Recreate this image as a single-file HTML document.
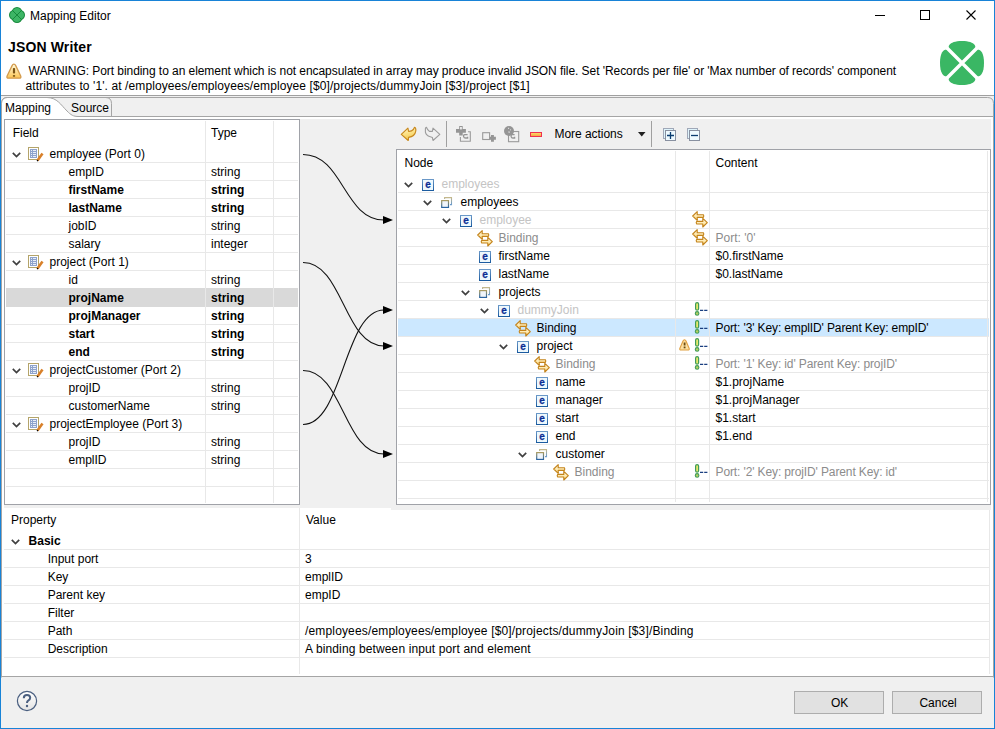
<!DOCTYPE html>
<html><head><meta charset="utf-8"><title>Mapping Editor</title>
<style>
html,body{margin:0;padding:0;}
body{width:995px;height:729px;overflow:hidden;position:relative;background:#f0f0f0;font-family:"Liberation Sans",sans-serif;font-size:12px;}
.t{position:absolute;white-space:pre;line-height:17px;height:17px;}
.r{position:absolute;}
.s{position:absolute;overflow:visible;}
</style></head><body>

<div class="r" style="left:0px;top:0px;width:995px;height:729px;background:#1883d7;"></div>
<div class="r" style="left:1px;top:1px;width:993px;height:727px;background:#f0f0f0;"></div>
<div class="r" style="left:1px;top:1px;width:993px;height:94px;background:#ffffff;"></div>
<svg class="s" style="left:9px;top:7px;" width="16" height="16" viewBox="0 0 16 16"><circle cx="8" cy="5.3" r="5.3" fill="#168a3c"/><circle cx="10.7" cy="8" r="5.3" fill="#168a3c"/><circle cx="8" cy="10.7" r="5.3" fill="#168a3c"/><circle cx="5.3" cy="8" r="5.3" fill="#168a3c"/><circle cx="8" cy="5.3" r="4.3" fill="#3db565"/><circle cx="10.7" cy="8" r="4.3" fill="#3db565"/><circle cx="8" cy="10.7" r="4.3" fill="#3db565"/><circle cx="5.3" cy="8" r="4.3" fill="#3db565"/><rect x="4" y="4" width="8" height="8" fill="#3db565"/><path d="M3.5,3.5 L12.5,12.5 M12.5,3.5 L3.5,12.5" stroke="#168a3c" stroke-width="1"/></svg>
<div class="t" style="left:30px;top:8px;color:#000;">Mapping Editor</div>
<div class="r" style="left:875px;top:15px;width:10px;height:1px;background:#000;"></div>
<div class="r" style="left:920px;top:10px;width:10px;height:10px;background:transparent;border:1px solid #000;box-sizing:border-box;"></div>
<svg class="s" style="left:966px;top:10px;" width="10" height="10" viewBox="0 0 10 10"><path d="M0.5,0.5 L9.5,9.5 M9.5,0.5 L0.5,9.5" stroke="#000" stroke-width="1.1"/></svg>
<div class="t" style="left:8px;top:39px;color:#000;font-weight:bold;font-size:14px;letter-spacing:0.15px;">JSON Writer</div>
<svg class="s" style="left:6px;top:63px;" width="16" height="17" viewBox="0 0 16 17"><defs><linearGradient id="wg" x1="0" y1="0" x2="0" y2="1"><stop offset="0" stop-color="#fffbe0"/><stop offset="1" stop-color="#fcc451"/></linearGradient></defs><path d="M7.9,1.2 Q9,1.2 9.7,2.6 L14.7,13 Q15.5,15.2 13.3,15.2 L2.5,15.2 Q0.3,15.2 1.1,13 L6.1,2.6 Q6.8,1.2 7.9,1.2 Z" fill="url(#wg)" stroke="#d39a4c" stroke-width="1.3" stroke-linejoin="round"/><rect x="6.9" y="5" width="2.2" height="5.6" rx="0.8" fill="#7a5214"/><rect x="6.9" y="12" width="2.2" height="1.8" fill="#8a6420"/></svg>
<div class="t" style="left:28.6px;top:63px;color:#000;letter-spacing:-0.06px;">WARNING: Port binding to an element which is not encapsulated in array may produce invalid JSON file. Set 'Records per file' or 'Max number of records' component</div>
<div class="t" style="left:25.6px;top:78px;color:#000;letter-spacing:0.1px;">attributes to '1'. at /employees/employees/employee [$0]/projects/dummyJoin [$3]/project [$1]</div>
<svg class="s" style="left:938px;top:39px;" width="48" height="48" viewBox="0 0 48 48"><path transform="rotate(0 24 24)" d="M24,24 L12.5,12.5 C8.5,8.5 10,2 24,2 C38,2 39.5,8.5 35.5,12.5 Z" fill="#3ab764"/><path transform="rotate(90 24 24)" d="M24,24 L12.5,12.5 C8.5,8.5 10,2 24,2 C38,2 39.5,8.5 35.5,12.5 Z" fill="#3ab764"/><path transform="rotate(180 24 24)" d="M24,24 L12.5,12.5 C8.5,8.5 10,2 24,2 C38,2 39.5,8.5 35.5,12.5 Z" fill="#3ab764"/><path transform="rotate(270 24 24)" d="M24,24 L12.5,12.5 C8.5,8.5 10,2 24,2 C38,2 39.5,8.5 35.5,12.5 Z" fill="#3ab764"/><path d="M2,2 L46,46 M46,2 L2,46" stroke="#fff" stroke-width="3.4"/></svg>
<div class="r" style="left:1px;top:95px;width:993px;height:1px;background:#a0a0a0;"></div>
<div class="r" style="left:2px;top:97px;width:991px;height:580px;background:#ffffff;"></div>
<div class="r" style="left:1px;top:97px;width:7px;height:7px;background:#f0f0f0;"></div>
<div class="r" style="left:986px;top:97px;width:8px;height:7px;background:#f0f0f0;"></div>
<svg class="s" style="left:1px;top:97px;" width="993" height="581" viewBox="0 0 993 581"><path d="M0.5,580.5 L0.5,6.5 Q0.5,0.5 6.5,0.5 L986.5,0.5 Q992.5,0.5 992.5,6.5 L992.5,580.5" fill="#f0f0f0" stroke="#a5a5a5" stroke-width="1"/><rect x="1" y="20" width="991" height="560" fill="#ffffff"/><path d="M0,19.5 L993,19.5" stroke="#a5a5a5" stroke-width="1"/><path d="M0,579.5 L993,579.5" stroke="#a5a5a5" stroke-width="1"/><path d="M110.5,19.5 L110.5,6.5 Q110.5,0.5 104.5,0.5" fill="none" stroke="#a5a5a5" stroke-width="1"/><path d="M1,20 L1,6.5 Q1,1 6.5,1 L46,1 C56,1 60,8 66,14 C70,18 72,19.5 78,19.5 L78,20 Z" fill="#ffffff"/><path d="M0.5,20 L0.5,6.5 Q0.5,0.5 6.5,0.5 L46,0.5 C56,0.5 60,8 66,14 C70,18 72,19.5 78,19.5 L110.5,19.5" fill="none" stroke="#a5a5a5" stroke-width="1"/></svg>
<div class="t" style="left:5px;top:100px;color:#000;">Mapping</div>
<div class="t" style="left:71px;top:100px;color:#000;">Source</div>
<div class="r" style="left:4px;top:119px;width:987px;height:389px;background:#f0f0f0;"></div>
<div class="r" style="left:391px;top:508px;width:600px;height:2px;background:#f0f0f0;"></div>
<div class="r" style="left:4px;top:119px;width:296px;height:386px;background:#ffffff;border:1px solid #a0a2a8;box-sizing:border-box;"></div>
<div class="r" style="left:6px;top:162px;width:292px;height:1px;background:#e8e8e8;"></div>
<div class="r" style="left:6px;top:180px;width:292px;height:1px;background:#e8e8e8;"></div>
<div class="r" style="left:6px;top:198px;width:292px;height:1px;background:#e8e8e8;"></div>
<div class="r" style="left:6px;top:216px;width:292px;height:1px;background:#e8e8e8;"></div>
<div class="r" style="left:6px;top:234px;width:292px;height:1px;background:#e8e8e8;"></div>
<div class="r" style="left:6px;top:252px;width:292px;height:1px;background:#e8e8e8;"></div>
<div class="r" style="left:6px;top:270px;width:292px;height:1px;background:#e8e8e8;"></div>
<div class="r" style="left:6px;top:288px;width:292px;height:1px;background:#e8e8e8;"></div>
<div class="r" style="left:6px;top:306px;width:292px;height:1px;background:#e8e8e8;"></div>
<div class="r" style="left:6px;top:324px;width:292px;height:1px;background:#e8e8e8;"></div>
<div class="r" style="left:6px;top:342px;width:292px;height:1px;background:#e8e8e8;"></div>
<div class="r" style="left:6px;top:360px;width:292px;height:1px;background:#e8e8e8;"></div>
<div class="r" style="left:6px;top:378px;width:292px;height:1px;background:#e8e8e8;"></div>
<div class="r" style="left:6px;top:396px;width:292px;height:1px;background:#e8e8e8;"></div>
<div class="r" style="left:6px;top:414px;width:292px;height:1px;background:#e8e8e8;"></div>
<div class="r" style="left:6px;top:432px;width:292px;height:1px;background:#e8e8e8;"></div>
<div class="r" style="left:6px;top:450px;width:292px;height:1px;background:#e8e8e8;"></div>
<div class="r" style="left:6px;top:468px;width:292px;height:1px;background:#e8e8e8;"></div>
<div class="r" style="left:6px;top:486px;width:292px;height:1px;background:#e8e8e8;"></div>
<div class="r" style="left:6px;top:288px;width:292px;height:19px;background:#d9d9d9;"></div>
<div class="r" style="left:205px;top:121px;width:1px;height:382px;background:#e8e8e8;"></div>
<div class="r" style="left:273px;top:121px;width:1px;height:382px;background:#e8e8e8;"></div>
<div class="t" style="left:12.7px;top:125px;color:#000;">Field</div>
<div class="t" style="left:211px;top:125px;color:#000;">Type</div>
<svg class="s" style="left:12px;top:152px;" width="9" height="6" viewBox="0 0 9 6"><path d="M0.8,0.8 L4.5,4.5 L8.2,0.8" fill="none" stroke="#404040" stroke-width="1.7"/></svg>
<svg class="s" style="left:28px;top:147px;" width="16" height="16" viewBox="0 0 16 16"><rect x="0.5" y="0.5" width="10" height="12" fill="#fff" stroke="#b4a46a"/><rect x="2" y="2" width="7" height="9" fill="#8ea3cc"/><path d="M3,3.5h1 M5,3.5h3 M3,5.5h1 M5,5.5h3 M3,7.5h1 M5,7.5h3 M3,9.5h1 M5,9.5h3" stroke="#e8eef8" stroke-width="1"/><path d="M9.5,13.5 L14.5,6.5" stroke="#d8802a" stroke-width="2.6"/><path d="M9.2,14.2 L9.8,13.2" stroke="#000" stroke-width="1.4"/></svg>
<div class="t" style="left:49.5px;top:146px;color:#000;">employee (Port 0)</div>
<div class="t" style="left:68.5px;top:164px;color:#000;">empID</div>
<div class="t" style="left:211px;top:164px;color:#000;">string</div>
<div class="t" style="left:68.5px;top:182px;color:#000;font-weight:bold;">firstName</div>
<div class="t" style="left:211px;top:182px;color:#000;font-weight:bold;">string</div>
<div class="t" style="left:68.5px;top:200px;color:#000;font-weight:bold;">lastName</div>
<div class="t" style="left:211px;top:200px;color:#000;font-weight:bold;">string</div>
<div class="t" style="left:68.5px;top:218px;color:#000;">jobID</div>
<div class="t" style="left:211px;top:218px;color:#000;">string</div>
<div class="t" style="left:68.5px;top:236px;color:#000;">salary</div>
<div class="t" style="left:211px;top:236px;color:#000;">integer</div>
<svg class="s" style="left:12px;top:260px;" width="9" height="6" viewBox="0 0 9 6"><path d="M0.8,0.8 L4.5,4.5 L8.2,0.8" fill="none" stroke="#404040" stroke-width="1.7"/></svg>
<svg class="s" style="left:28px;top:255px;" width="16" height="16" viewBox="0 0 16 16"><rect x="0.5" y="0.5" width="10" height="12" fill="#fff" stroke="#b4a46a"/><rect x="2" y="2" width="7" height="9" fill="#8ea3cc"/><path d="M3,3.5h1 M5,3.5h3 M3,5.5h1 M5,5.5h3 M3,7.5h1 M5,7.5h3 M3,9.5h1 M5,9.5h3" stroke="#e8eef8" stroke-width="1"/><path d="M9.5,13.5 L14.5,6.5" stroke="#d8802a" stroke-width="2.6"/><path d="M9.2,14.2 L9.8,13.2" stroke="#000" stroke-width="1.4"/></svg>
<div class="t" style="left:49.5px;top:254px;color:#000;">project (Port 1)</div>
<div class="t" style="left:68.5px;top:272px;color:#000;">id</div>
<div class="t" style="left:211px;top:272px;color:#000;">string</div>
<div class="t" style="left:68.5px;top:290px;color:#000;font-weight:bold;">projName</div>
<div class="t" style="left:211px;top:290px;color:#000;font-weight:bold;">string</div>
<div class="t" style="left:68.5px;top:308px;color:#000;font-weight:bold;">projManager</div>
<div class="t" style="left:211px;top:308px;color:#000;font-weight:bold;">string</div>
<div class="t" style="left:68.5px;top:326px;color:#000;font-weight:bold;">start</div>
<div class="t" style="left:211px;top:326px;color:#000;font-weight:bold;">string</div>
<div class="t" style="left:68.5px;top:344px;color:#000;font-weight:bold;">end</div>
<div class="t" style="left:211px;top:344px;color:#000;font-weight:bold;">string</div>
<svg class="s" style="left:12px;top:368px;" width="9" height="6" viewBox="0 0 9 6"><path d="M0.8,0.8 L4.5,4.5 L8.2,0.8" fill="none" stroke="#404040" stroke-width="1.7"/></svg>
<svg class="s" style="left:28px;top:363px;" width="16" height="16" viewBox="0 0 16 16"><rect x="0.5" y="0.5" width="10" height="12" fill="#fff" stroke="#b4a46a"/><rect x="2" y="2" width="7" height="9" fill="#8ea3cc"/><path d="M3,3.5h1 M5,3.5h3 M3,5.5h1 M5,5.5h3 M3,7.5h1 M5,7.5h3 M3,9.5h1 M5,9.5h3" stroke="#e8eef8" stroke-width="1"/><path d="M9.5,13.5 L14.5,6.5" stroke="#d8802a" stroke-width="2.6"/><path d="M9.2,14.2 L9.8,13.2" stroke="#000" stroke-width="1.4"/></svg>
<div class="t" style="left:49.5px;top:362px;color:#000;">projectCustomer (Port 2)</div>
<div class="t" style="left:68.5px;top:380px;color:#000;">projID</div>
<div class="t" style="left:211px;top:380px;color:#000;">string</div>
<div class="t" style="left:68.5px;top:398px;color:#000;">customerName</div>
<div class="t" style="left:211px;top:398px;color:#000;">string</div>
<svg class="s" style="left:12px;top:422px;" width="9" height="6" viewBox="0 0 9 6"><path d="M0.8,0.8 L4.5,4.5 L8.2,0.8" fill="none" stroke="#404040" stroke-width="1.7"/></svg>
<svg class="s" style="left:28px;top:417px;" width="16" height="16" viewBox="0 0 16 16"><rect x="0.5" y="0.5" width="10" height="12" fill="#fff" stroke="#b4a46a"/><rect x="2" y="2" width="7" height="9" fill="#8ea3cc"/><path d="M3,3.5h1 M5,3.5h3 M3,5.5h1 M5,5.5h3 M3,7.5h1 M5,7.5h3 M3,9.5h1 M5,9.5h3" stroke="#e8eef8" stroke-width="1"/><path d="M9.5,13.5 L14.5,6.5" stroke="#d8802a" stroke-width="2.6"/><path d="M9.2,14.2 L9.8,13.2" stroke="#000" stroke-width="1.4"/></svg>
<div class="t" style="left:49.5px;top:416px;color:#000;">projectEmployee (Port 3)</div>
<div class="t" style="left:68.5px;top:434px;color:#000;">projID</div>
<div class="t" style="left:211px;top:434px;color:#000;">string</div>
<div class="t" style="left:68.5px;top:452px;color:#000;">emplID</div>
<div class="t" style="left:211px;top:452px;color:#000;">string</div>
<svg class="s" style="left:400px;top:126px;" width="17" height="16" viewBox="0 0 17 16"><defs><linearGradient id="ug" x1="0" y1="0" x2="0.3" y2="1"><stop offset="0" stop-color="#fffbe8"/><stop offset="0.5" stop-color="#fde48a"/><stop offset="1" stop-color="#f2c850"/></linearGradient></defs><path d="M1.3,8.4 L7.9,2.1 L8.6,5.4 Q11.5,5.6 13.4,3.5 Q14,2 14.5,1.3 Q16.2,2 15.8,5 Q15.5,7.5 13.4,9.5 Q11.8,11 8.6,11.4 L8.2,14.5 Z" fill="url(#ug)" stroke="#c8881c" stroke-width="1.15" stroke-linejoin="round"/></svg>
<svg class="s" style="left:424px;top:126px;" width="17" height="16" viewBox="0 0 17 16"><path d="M15.8,8.4 L9,2.1 L8.4,5.4 L5.4,5.4 Q3.5,4 2.4,1.3 Q1.4,1.8 1.4,2.6 L1.4,6.2 Q1.8,8 2.7,8.7 Q4,10 4.9,10.3 L8.4,11.4 L9,14.5 Z" fill="none" stroke="#9c9c9c" stroke-width="1.1" stroke-linejoin="round"/></svg>
<div class="r" style="left:446px;top:121px;width:1px;height:26px;background:#a0a0a0;"></div>
<svg class="s" style="left:453px;top:124px;" width="22" height="20" viewBox="0 0 22 20"><path d="M6.2,2.1 h3.5 v3 h3.2 v3.7 h-3.2 v2.7 h-3.5 v-2.7 h-3.2 v-3.7 h3.2 Z" fill="#959595"/><rect x="7.1" y="3" width="1.7" height="2.4" fill="#f4f4f4"/><path d="M15,7.8 H17.3 V17.3 H7.4 V13" fill="none" stroke="#9a9a9a" stroke-width="1.1"/><path d="M14.6,10.6 H11.8 Q10.3,10.8 10.6,12.6 Q11,14 12.5,14 H14.6 V12.8" fill="none" stroke="#959595" stroke-width="1.3"/></svg>
<svg class="s" style="left:478px;top:124px;" width="22" height="20" viewBox="0 0 22 20"><rect x="4.7" y="8.7" width="6.9" height="6.8" fill="none" stroke="#9a9a9a" stroke-width="1.1"/><path d="M14.45,11 v6.7 M11.7,14.25 h6.2" stroke="#959595" stroke-width="2.9"/></svg>
<svg class="s" style="left:500px;top:124px;" width="22" height="20" viewBox="0 0 22 20"><rect x="8.5" y="7.5" width="10.2" height="10.2" fill="none" stroke="#9a9a9a" stroke-width="1.1"/><circle cx="9" cy="7" r="5" fill="#959595"/><path d="M8.3,4 l0.6,0.6 M10.2,5.6 l0.6,0.6 M8.6,7.6 l0.9,0.9" stroke="#f0f0f0" stroke-width="1.1"/><path d="M14.6,10.6 H12.2 Q10.9,10.8 11.1,12.6 Q11.5,14 12.8,14 H14.6 V12.8" fill="none" stroke="#959595" stroke-width="1.3"/></svg>
<svg class="s" style="left:530px;top:132px;" width="13" height="6" viewBox="0 0 13 6"><defs><linearGradient id="rg" x1="0" y1="0" x2="0" y2="1"><stop offset="0" stop-color="#ffe070"/><stop offset="1" stop-color="#f4a040"/></linearGradient></defs><rect x="0.5" y="0.5" width="11" height="4" fill="url(#rg)" stroke="#f03050"/></svg>
<div class="t" style="left:554.5px;top:126px;color:#000;letter-spacing:-0.05px;">More actions</div>
<svg class="s" style="left:638px;top:132px;" width="8" height="5" viewBox="0 0 8 5"><path d="M0,0 L7.5,0 L3.75,4.5 Z" fill="#202020"/></svg>
<div class="r" style="left:651px;top:121px;width:1px;height:26px;background:#a0a0a0;"></div>
<svg class="s" style="left:662px;top:127px;" width="15" height="15" viewBox="0 0 15 15"><rect x="1.5" y="1.5" width="10" height="10" fill="#dff4fc" stroke="#a0a8b8"/><rect x="3.5" y="3.5" width="10" height="10" fill="#eefaff" stroke="#8890a0"/><path d="M5,8.5 h7 M8.5,5 v7" stroke="#0a3d70" stroke-width="1.3"/></svg>
<svg class="s" style="left:686px;top:127px;" width="15" height="15" viewBox="0 0 15 15"><rect x="1.5" y="1.5" width="10" height="10" fill="#dff4fc" stroke="#a0a8b8"/><rect x="3.5" y="3.5" width="10" height="10" fill="#eefaff" stroke="#8890a0"/><path d="M5,8.5 h7" stroke="#0a3d70" stroke-width="1.3"/></svg>
<div class="r" style="left:396px;top:149px;width:595px;height:356px;background:#ffffff;border:1px solid #a0a2a8;box-sizing:border-box;"></div>
<div class="r" style="left:398px;top:192px;width:591px;height:1px;background:#e8e8e8;"></div>
<div class="r" style="left:398px;top:210px;width:591px;height:1px;background:#e8e8e8;"></div>
<div class="r" style="left:398px;top:228px;width:591px;height:1px;background:#e8e8e8;"></div>
<div class="r" style="left:398px;top:246px;width:591px;height:1px;background:#e8e8e8;"></div>
<div class="r" style="left:398px;top:264px;width:591px;height:1px;background:#e8e8e8;"></div>
<div class="r" style="left:398px;top:282px;width:591px;height:1px;background:#e8e8e8;"></div>
<div class="r" style="left:398px;top:300px;width:591px;height:1px;background:#e8e8e8;"></div>
<div class="r" style="left:398px;top:318px;width:591px;height:1px;background:#e8e8e8;"></div>
<div class="r" style="left:398px;top:336px;width:591px;height:1px;background:#e8e8e8;"></div>
<div class="r" style="left:398px;top:354px;width:591px;height:1px;background:#e8e8e8;"></div>
<div class="r" style="left:398px;top:372px;width:591px;height:1px;background:#e8e8e8;"></div>
<div class="r" style="left:398px;top:390px;width:591px;height:1px;background:#e8e8e8;"></div>
<div class="r" style="left:398px;top:408px;width:591px;height:1px;background:#e8e8e8;"></div>
<div class="r" style="left:398px;top:426px;width:591px;height:1px;background:#e8e8e8;"></div>
<div class="r" style="left:398px;top:444px;width:591px;height:1px;background:#e8e8e8;"></div>
<div class="r" style="left:398px;top:462px;width:591px;height:1px;background:#e8e8e8;"></div>
<div class="r" style="left:398px;top:480px;width:591px;height:1px;background:#e8e8e8;"></div>
<div class="r" style="left:398px;top:498px;width:591px;height:1px;background:#e8e8e8;"></div>
<div class="r" style="left:398px;top:319px;width:591px;height:17px;background:#cce8ff;"></div>
<div class="r" style="left:675px;top:151px;width:1px;height:351px;background:#e8e8e8;"></div>
<div class="r" style="left:709px;top:151px;width:1px;height:351px;background:#e8e8e8;"></div>
<div class="r" style="left:987px;top:151px;width:1px;height:351px;background:#e8e8e8;"></div>
<div class="t" style="left:404.5px;top:155px;color:#000;">Node</div>
<div class="t" style="left:715.5px;top:155px;color:#000;">Content</div>
<svg class="s" style="left:404px;top:182px;" width="9" height="6" viewBox="0 0 9 6"><path d="M0.8,0.8 L4.5,4.5 L8.2,0.8" fill="none" stroke="#404040" stroke-width="1.7"/></svg>
<svg class="s" style="left:422px;top:179px;" width="12" height="12" viewBox="0 0 12 12"><defs><linearGradient id="eg" x1="0" y1="0" x2="0" y2="1"><stop offset="0" stop-color="#6a98c8"/><stop offset="1" stop-color="#1c5ca0"/></linearGradient></defs><rect x="0.5" y="0.5" width="11" height="11" fill="#eef8fd" stroke="url(#eg)"/><text x="6.1" y="8.8" text-anchor="middle" font-family="Liberation Sans" font-weight="bold" font-size="10" fill="#0c2e94" stroke="#0c2e94" stroke-width="0.3">e</text></svg>
<div class="t" style="left:441.5px;top:176px;color:#c4c4c4;">employees</div>
<svg class="s" style="left:423px;top:200px;" width="9" height="6" viewBox="0 0 9 6"><path d="M0.8,0.8 L4.5,4.5 L8.2,0.8" fill="none" stroke="#404040" stroke-width="1.7"/></svg>
<svg class="s" style="left:441px;top:197px;" width="12" height="12" viewBox="0 0 12 12"><defs><linearGradient id="cg" x1="0" y1="0" x2="0" y2="1"><stop offset="0" stop-color="#a89a62"/><stop offset="1" stop-color="#2a64a2"/></linearGradient><linearGradient id="cg2" x1="0" y1="0" x2="0" y2="1"><stop offset="0" stop-color="#c4b88c"/><stop offset="1" stop-color="#6a9acb"/></linearGradient></defs><path d="M3.6,2 V0.6 H10.5 V7.6 H9" fill="none" stroke="url(#cg2)" stroke-width="1.1"/><rect x="0.7" y="3.6" width="6.8" height="6.8" fill="#f0f5fb" stroke="url(#cg)" stroke-width="1.2"/></svg>
<div class="t" style="left:460.5px;top:194px;color:#000;">employees</div>
<svg class="s" style="left:442px;top:218px;" width="9" height="6" viewBox="0 0 9 6"><path d="M0.8,0.8 L4.5,4.5 L8.2,0.8" fill="none" stroke="#404040" stroke-width="1.7"/></svg>
<svg class="s" style="left:460px;top:215px;" width="12" height="12" viewBox="0 0 12 12"><defs><linearGradient id="eg" x1="0" y1="0" x2="0" y2="1"><stop offset="0" stop-color="#6a98c8"/><stop offset="1" stop-color="#1c5ca0"/></linearGradient></defs><rect x="0.5" y="0.5" width="11" height="11" fill="#eef8fd" stroke="url(#eg)"/><text x="6.1" y="8.8" text-anchor="middle" font-family="Liberation Sans" font-weight="bold" font-size="10" fill="#0c2e94" stroke="#0c2e94" stroke-width="0.3">e</text></svg>
<div class="t" style="left:479.5px;top:212px;color:#c4c4c4;">employee</div>
<svg class="s" style="left:692px;top:211px;" width="16" height="17" viewBox="0 0 16 17"><defs><linearGradient id="bg" x1="0" y1="0" x2="0" y2="1"><stop offset="0" stop-color="#fffbe8"/><stop offset="1" stop-color="#ffdc80"/></linearGradient></defs><path d="M0.7,5 L5.2,0.7 L5.2,3.7 L11.3,3.7 Q12.3,5 11.3,6.3 L5.2,6.3 L5.2,9.3 Z" fill="url(#bg)" stroke="#c4841c" stroke-width="1.15" stroke-linejoin="round"/><path d="M15.3,11.7 L10.8,7.4 L10.8,10.4 L4.7,10.4 Q3.7,11.7 4.7,13 L10.8,13 L10.8,16 Z" fill="url(#bg)" stroke="#c4841c" stroke-width="1.15" stroke-linejoin="round"/></svg>
<svg class="s" style="left:477px;top:230px;" width="16" height="17" viewBox="0 0 16 17"><defs><linearGradient id="bg" x1="0" y1="0" x2="0" y2="1"><stop offset="0" stop-color="#fffbe8"/><stop offset="1" stop-color="#ffdc80"/></linearGradient></defs><path d="M0.7,5 L5.2,0.7 L5.2,3.7 L11.3,3.7 Q12.3,5 11.3,6.3 L5.2,6.3 L5.2,9.3 Z" fill="url(#bg)" stroke="#c4841c" stroke-width="1.15" stroke-linejoin="round"/><path d="M15.3,11.7 L10.8,7.4 L10.8,10.4 L4.7,10.4 Q3.7,11.7 4.7,13 L10.8,13 L10.8,16 Z" fill="url(#bg)" stroke="#c4841c" stroke-width="1.15" stroke-linejoin="round"/></svg>
<div class="t" style="left:498.5px;top:230px;color:#8c8c8c;">Binding</div>
<svg class="s" style="left:692px;top:229px;" width="16" height="17" viewBox="0 0 16 17"><defs><linearGradient id="bg" x1="0" y1="0" x2="0" y2="1"><stop offset="0" stop-color="#fffbe8"/><stop offset="1" stop-color="#ffdc80"/></linearGradient></defs><path d="M0.7,5 L5.2,0.7 L5.2,3.7 L11.3,3.7 Q12.3,5 11.3,6.3 L5.2,6.3 L5.2,9.3 Z" fill="url(#bg)" stroke="#c4841c" stroke-width="1.15" stroke-linejoin="round"/><path d="M15.3,11.7 L10.8,7.4 L10.8,10.4 L4.7,10.4 Q3.7,11.7 4.7,13 L10.8,13 L10.8,16 Z" fill="url(#bg)" stroke="#c4841c" stroke-width="1.15" stroke-linejoin="round"/></svg>
<div class="t" style="left:715.5px;top:230px;color:#8c8c8c;">Port: '0'</div>
<svg class="s" style="left:479px;top:251px;" width="12" height="12" viewBox="0 0 12 12"><defs><linearGradient id="eg" x1="0" y1="0" x2="0" y2="1"><stop offset="0" stop-color="#6a98c8"/><stop offset="1" stop-color="#1c5ca0"/></linearGradient></defs><rect x="0.5" y="0.5" width="11" height="11" fill="#eef8fd" stroke="url(#eg)"/><text x="6.1" y="8.8" text-anchor="middle" font-family="Liberation Sans" font-weight="bold" font-size="10" fill="#0c2e94" stroke="#0c2e94" stroke-width="0.3">e</text></svg>
<div class="t" style="left:498.5px;top:248px;color:#000;">firstName</div>
<div class="t" style="left:715.5px;top:248px;color:#000;">$0.firstName</div>
<svg class="s" style="left:479px;top:269px;" width="12" height="12" viewBox="0 0 12 12"><defs><linearGradient id="eg" x1="0" y1="0" x2="0" y2="1"><stop offset="0" stop-color="#6a98c8"/><stop offset="1" stop-color="#1c5ca0"/></linearGradient></defs><rect x="0.5" y="0.5" width="11" height="11" fill="#eef8fd" stroke="url(#eg)"/><text x="6.1" y="8.8" text-anchor="middle" font-family="Liberation Sans" font-weight="bold" font-size="10" fill="#0c2e94" stroke="#0c2e94" stroke-width="0.3">e</text></svg>
<div class="t" style="left:498.5px;top:266px;color:#000;">lastName</div>
<div class="t" style="left:715.5px;top:266px;color:#000;">$0.lastName</div>
<svg class="s" style="left:461px;top:290px;" width="9" height="6" viewBox="0 0 9 6"><path d="M0.8,0.8 L4.5,4.5 L8.2,0.8" fill="none" stroke="#404040" stroke-width="1.7"/></svg>
<svg class="s" style="left:479px;top:287px;" width="12" height="12" viewBox="0 0 12 12"><defs><linearGradient id="cg" x1="0" y1="0" x2="0" y2="1"><stop offset="0" stop-color="#a89a62"/><stop offset="1" stop-color="#2a64a2"/></linearGradient><linearGradient id="cg2" x1="0" y1="0" x2="0" y2="1"><stop offset="0" stop-color="#c4b88c"/><stop offset="1" stop-color="#6a9acb"/></linearGradient></defs><path d="M3.6,2 V0.6 H10.5 V7.6 H9" fill="none" stroke="url(#cg2)" stroke-width="1.1"/><rect x="0.7" y="3.6" width="6.8" height="6.8" fill="#f0f5fb" stroke="url(#cg)" stroke-width="1.2"/></svg>
<div class="t" style="left:498.5px;top:284px;color:#000;">projects</div>
<svg class="s" style="left:480px;top:308px;" width="9" height="6" viewBox="0 0 9 6"><path d="M0.8,0.8 L4.5,4.5 L8.2,0.8" fill="none" stroke="#404040" stroke-width="1.7"/></svg>
<svg class="s" style="left:498px;top:305px;" width="12" height="12" viewBox="0 0 12 12"><defs><linearGradient id="eg" x1="0" y1="0" x2="0" y2="1"><stop offset="0" stop-color="#6a98c8"/><stop offset="1" stop-color="#1c5ca0"/></linearGradient></defs><rect x="0.5" y="0.5" width="11" height="11" fill="#eef8fd" stroke="url(#eg)"/><text x="6.1" y="8.8" text-anchor="middle" font-family="Liberation Sans" font-weight="bold" font-size="10" fill="#0c2e94" stroke="#0c2e94" stroke-width="0.3">e</text></svg>
<div class="t" style="left:517.5px;top:302px;color:#c4c4c4;">dummyJoin</div>
<svg class="s" style="left:695px;top:302px;" width="13" height="15" viewBox="0 0 13 15"><rect x="0.6" y="0.6" width="3" height="7.6" rx="1.5" fill="#e6e86a" stroke="#3f9c5a" stroke-width="1.2"/><circle cx="2.1" cy="11.4" r="1.8" fill="#b8d060" stroke="#3f9c5a" stroke-width="1.1"/><path d="M5,8.4 h3.2 M9.2,8.4 h3.2" stroke="#1a3f80" stroke-width="1.2"/></svg>
<svg class="s" style="left:515px;top:320px;" width="16" height="17" viewBox="0 0 16 17"><defs><linearGradient id="bg" x1="0" y1="0" x2="0" y2="1"><stop offset="0" stop-color="#fffbe8"/><stop offset="1" stop-color="#ffdc80"/></linearGradient></defs><path d="M0.7,5 L5.2,0.7 L5.2,3.7 L11.3,3.7 Q12.3,5 11.3,6.3 L5.2,6.3 L5.2,9.3 Z" fill="url(#bg)" stroke="#c4841c" stroke-width="1.15" stroke-linejoin="round"/><path d="M15.3,11.7 L10.8,7.4 L10.8,10.4 L4.7,10.4 Q3.7,11.7 4.7,13 L10.8,13 L10.8,16 Z" fill="url(#bg)" stroke="#c4841c" stroke-width="1.15" stroke-linejoin="round"/></svg>
<div class="t" style="left:536.5px;top:320px;color:#000;">Binding</div>
<svg class="s" style="left:695px;top:320px;" width="13" height="15" viewBox="0 0 13 15"><rect x="0.6" y="0.6" width="3" height="7.6" rx="1.5" fill="#e6e86a" stroke="#3f9c5a" stroke-width="1.2"/><circle cx="2.1" cy="11.4" r="1.8" fill="#b8d060" stroke="#3f9c5a" stroke-width="1.1"/><path d="M5,8.4 h3.2 M9.2,8.4 h3.2" stroke="#1a3f80" stroke-width="1.2"/></svg>
<div class="t" style="left:715.5px;top:320px;color:#000;letter-spacing:-0.12px;">Port: '3' Key: emplID' Parent Key: empID'</div>
<svg class="s" style="left:499px;top:344px;" width="9" height="6" viewBox="0 0 9 6"><path d="M0.8,0.8 L4.5,4.5 L8.2,0.8" fill="none" stroke="#404040" stroke-width="1.7"/></svg>
<svg class="s" style="left:517px;top:341px;" width="12" height="12" viewBox="0 0 12 12"><defs><linearGradient id="eg" x1="0" y1="0" x2="0" y2="1"><stop offset="0" stop-color="#6a98c8"/><stop offset="1" stop-color="#1c5ca0"/></linearGradient></defs><rect x="0.5" y="0.5" width="11" height="11" fill="#eef8fd" stroke="url(#eg)"/><text x="6.1" y="8.8" text-anchor="middle" font-family="Liberation Sans" font-weight="bold" font-size="10" fill="#0c2e94" stroke="#0c2e94" stroke-width="0.3">e</text></svg>
<div class="t" style="left:536.5px;top:338px;color:#000;">project</div>
<svg class="s" style="left:695px;top:338px;" width="13" height="15" viewBox="0 0 13 15"><rect x="0.6" y="0.6" width="3" height="7.6" rx="1.5" fill="#e6e86a" stroke="#3f9c5a" stroke-width="1.2"/><circle cx="2.1" cy="11.4" r="1.8" fill="#b8d060" stroke="#3f9c5a" stroke-width="1.1"/><path d="M5,8.4 h3.2 M9.2,8.4 h3.2" stroke="#1a3f80" stroke-width="1.2"/></svg>
<svg class="s" style="left:679px;top:339px;" width="11" height="12" viewBox="0 0 11 12"><path d="M5.5,0.8 Q6.5,0.8 7,2 L10.2,9.5 Q10.6,11 9,11 L2,11 Q0.4,11 0.8,9.5 L4,2 Q4.5,0.8 5.5,0.8 Z" fill="#fde0a0" stroke="#e0a040" stroke-width="1.1"/><rect x="4.7" y="3.5" width="1.8" height="3" fill="#6a4a10"/><rect x="4.7" y="7.5" width="1.8" height="1.8" fill="#6a4a10"/></svg>
<svg class="s" style="left:534px;top:356px;" width="16" height="17" viewBox="0 0 16 17"><defs><linearGradient id="bg" x1="0" y1="0" x2="0" y2="1"><stop offset="0" stop-color="#fffbe8"/><stop offset="1" stop-color="#ffdc80"/></linearGradient></defs><path d="M0.7,5 L5.2,0.7 L5.2,3.7 L11.3,3.7 Q12.3,5 11.3,6.3 L5.2,6.3 L5.2,9.3 Z" fill="url(#bg)" stroke="#c4841c" stroke-width="1.15" stroke-linejoin="round"/><path d="M15.3,11.7 L10.8,7.4 L10.8,10.4 L4.7,10.4 Q3.7,11.7 4.7,13 L10.8,13 L10.8,16 Z" fill="url(#bg)" stroke="#c4841c" stroke-width="1.15" stroke-linejoin="round"/></svg>
<div class="t" style="left:555.5px;top:356px;color:#8c8c8c;">Binding</div>
<svg class="s" style="left:695px;top:356px;" width="13" height="15" viewBox="0 0 13 15"><rect x="0.6" y="0.6" width="3" height="7.6" rx="1.5" fill="#e6e86a" stroke="#3f9c5a" stroke-width="1.2"/><circle cx="2.1" cy="11.4" r="1.8" fill="#b8d060" stroke="#3f9c5a" stroke-width="1.1"/><path d="M5,8.4 h3.2 M9.2,8.4 h3.2" stroke="#1a3f80" stroke-width="1.2"/></svg>
<div class="t" style="left:715.5px;top:356px;color:#8c8c8c;letter-spacing:-0.12px;">Port: '1' Key: id' Parent Key: projID'</div>
<svg class="s" style="left:536px;top:377px;" width="12" height="12" viewBox="0 0 12 12"><defs><linearGradient id="eg" x1="0" y1="0" x2="0" y2="1"><stop offset="0" stop-color="#6a98c8"/><stop offset="1" stop-color="#1c5ca0"/></linearGradient></defs><rect x="0.5" y="0.5" width="11" height="11" fill="#eef8fd" stroke="url(#eg)"/><text x="6.1" y="8.8" text-anchor="middle" font-family="Liberation Sans" font-weight="bold" font-size="10" fill="#0c2e94" stroke="#0c2e94" stroke-width="0.3">e</text></svg>
<div class="t" style="left:555.5px;top:374px;color:#000;">name</div>
<div class="t" style="left:715.5px;top:374px;color:#000;">$1.projName</div>
<svg class="s" style="left:536px;top:395px;" width="12" height="12" viewBox="0 0 12 12"><defs><linearGradient id="eg" x1="0" y1="0" x2="0" y2="1"><stop offset="0" stop-color="#6a98c8"/><stop offset="1" stop-color="#1c5ca0"/></linearGradient></defs><rect x="0.5" y="0.5" width="11" height="11" fill="#eef8fd" stroke="url(#eg)"/><text x="6.1" y="8.8" text-anchor="middle" font-family="Liberation Sans" font-weight="bold" font-size="10" fill="#0c2e94" stroke="#0c2e94" stroke-width="0.3">e</text></svg>
<div class="t" style="left:555.5px;top:392px;color:#000;">manager</div>
<div class="t" style="left:715.5px;top:392px;color:#000;">$1.projManager</div>
<svg class="s" style="left:536px;top:413px;" width="12" height="12" viewBox="0 0 12 12"><defs><linearGradient id="eg" x1="0" y1="0" x2="0" y2="1"><stop offset="0" stop-color="#6a98c8"/><stop offset="1" stop-color="#1c5ca0"/></linearGradient></defs><rect x="0.5" y="0.5" width="11" height="11" fill="#eef8fd" stroke="url(#eg)"/><text x="6.1" y="8.8" text-anchor="middle" font-family="Liberation Sans" font-weight="bold" font-size="10" fill="#0c2e94" stroke="#0c2e94" stroke-width="0.3">e</text></svg>
<div class="t" style="left:555.5px;top:410px;color:#000;">start</div>
<div class="t" style="left:715.5px;top:410px;color:#000;">$1.start</div>
<svg class="s" style="left:536px;top:431px;" width="12" height="12" viewBox="0 0 12 12"><defs><linearGradient id="eg" x1="0" y1="0" x2="0" y2="1"><stop offset="0" stop-color="#6a98c8"/><stop offset="1" stop-color="#1c5ca0"/></linearGradient></defs><rect x="0.5" y="0.5" width="11" height="11" fill="#eef8fd" stroke="url(#eg)"/><text x="6.1" y="8.8" text-anchor="middle" font-family="Liberation Sans" font-weight="bold" font-size="10" fill="#0c2e94" stroke="#0c2e94" stroke-width="0.3">e</text></svg>
<div class="t" style="left:555.5px;top:428px;color:#000;">end</div>
<div class="t" style="left:715.5px;top:428px;color:#000;">$1.end</div>
<svg class="s" style="left:518px;top:452px;" width="9" height="6" viewBox="0 0 9 6"><path d="M0.8,0.8 L4.5,4.5 L8.2,0.8" fill="none" stroke="#404040" stroke-width="1.7"/></svg>
<svg class="s" style="left:536px;top:449px;" width="12" height="12" viewBox="0 0 12 12"><defs><linearGradient id="cg" x1="0" y1="0" x2="0" y2="1"><stop offset="0" stop-color="#a89a62"/><stop offset="1" stop-color="#2a64a2"/></linearGradient><linearGradient id="cg2" x1="0" y1="0" x2="0" y2="1"><stop offset="0" stop-color="#c4b88c"/><stop offset="1" stop-color="#6a9acb"/></linearGradient></defs><path d="M3.6,2 V0.6 H10.5 V7.6 H9" fill="none" stroke="url(#cg2)" stroke-width="1.1"/><rect x="0.7" y="3.6" width="6.8" height="6.8" fill="#f0f5fb" stroke="url(#cg)" stroke-width="1.2"/></svg>
<div class="t" style="left:555.5px;top:446px;color:#000;">customer</div>
<svg class="s" style="left:553px;top:464px;" width="16" height="17" viewBox="0 0 16 17"><defs><linearGradient id="bg" x1="0" y1="0" x2="0" y2="1"><stop offset="0" stop-color="#fffbe8"/><stop offset="1" stop-color="#ffdc80"/></linearGradient></defs><path d="M0.7,5 L5.2,0.7 L5.2,3.7 L11.3,3.7 Q12.3,5 11.3,6.3 L5.2,6.3 L5.2,9.3 Z" fill="url(#bg)" stroke="#c4841c" stroke-width="1.15" stroke-linejoin="round"/><path d="M15.3,11.7 L10.8,7.4 L10.8,10.4 L4.7,10.4 Q3.7,11.7 4.7,13 L10.8,13 L10.8,16 Z" fill="url(#bg)" stroke="#c4841c" stroke-width="1.15" stroke-linejoin="round"/></svg>
<div class="t" style="left:574.5px;top:464px;color:#8c8c8c;">Binding</div>
<svg class="s" style="left:695px;top:464px;" width="13" height="15" viewBox="0 0 13 15"><rect x="0.6" y="0.6" width="3" height="7.6" rx="1.5" fill="#e6e86a" stroke="#3f9c5a" stroke-width="1.2"/><circle cx="2.1" cy="11.4" r="1.8" fill="#b8d060" stroke="#3f9c5a" stroke-width="1.1"/><path d="M5,8.4 h3.2 M9.2,8.4 h3.2" stroke="#1a3f80" stroke-width="1.2"/></svg>
<div class="t" style="left:715.5px;top:464px;color:#8c8c8c;letter-spacing:-0.12px;">Port: '2' Key: projID' Parent Key: id'</div>
<svg class="s" style="left:0px;top:0px;" width="995" height="729" viewBox="0 0 995 729"><path d="M303,154.5 C343,154.5 344,220 384,220" fill="none" stroke="#111" stroke-width="1.05"/><path d="M383,216 L393,220 L383,224 Z" fill="#000"/><path d="M303,262.5 C343,262.5 344,346 384,346" fill="none" stroke="#111" stroke-width="1.05"/><path d="M383,342 L393,346 L383,350 Z" fill="#000"/><path d="M303,370.5 C343,370.5 344,454 384,454" fill="none" stroke="#111" stroke-width="1.05"/><path d="M383,450 L393,454 L383,458 Z" fill="#000"/><path d="M303,424.5 C343,424.5 344,310 384,310" fill="none" stroke="#111" stroke-width="1.05"/><path d="M383,306 L393,310 L383,314 Z" fill="#000"/></svg>
<div class="r" style="left:4px;top:549px;width:986px;height:1px;background:#e8e8e8;"></div>
<div class="r" style="left:4px;top:567px;width:986px;height:1px;background:#e8e8e8;"></div>
<div class="r" style="left:4px;top:585px;width:986px;height:1px;background:#e8e8e8;"></div>
<div class="r" style="left:4px;top:603px;width:986px;height:1px;background:#e8e8e8;"></div>
<div class="r" style="left:4px;top:621px;width:986px;height:1px;background:#e8e8e8;"></div>
<div class="r" style="left:4px;top:639px;width:986px;height:1px;background:#e8e8e8;"></div>
<div class="r" style="left:4px;top:657px;width:986px;height:1px;background:#e8e8e8;"></div>
<div class="r" style="left:299px;top:508px;width:1px;height:166px;background:#e8e8e8;"></div>
<div class="r" style="left:989px;top:510px;width:1px;height:164px;background:#e8e8e8;"></div>
<div class="t" style="left:11px;top:512px;color:#000;">Property</div>
<div class="t" style="left:306px;top:512px;color:#000;">Value</div>
<svg class="s" style="left:11px;top:539px;" width="9" height="6" viewBox="0 0 9 6"><path d="M0.8,0.8 L4.5,4.5 L8.2,0.8" fill="none" stroke="#404040" stroke-width="1.7"/></svg>
<div class="t" style="left:28.6px;top:533px;color:#000;font-weight:bold;">Basic</div>
<div class="t" style="left:47.7px;top:551px;color:#000;">Input port</div>
<div class="t" style="left:305px;top:551px;color:#000;">3</div>
<div class="t" style="left:47.7px;top:569px;color:#000;">Key</div>
<div class="t" style="left:305px;top:569px;color:#000;">emplID</div>
<div class="t" style="left:47.7px;top:587px;color:#000;">Parent key</div>
<div class="t" style="left:305px;top:587px;color:#000;">empID</div>
<div class="t" style="left:47.7px;top:605px;color:#000;">Filter</div>
<div class="t" style="left:47.7px;top:623px;color:#000;">Path</div>
<div class="t" style="left:305px;top:623px;color:#000;letter-spacing:0.157px;">/employees/employees/employee [$0]/projects/dummyJoin [$3]/Binding</div>
<div class="t" style="left:47.7px;top:641px;color:#000;">Description</div>
<div class="t" style="left:305px;top:641px;color:#000;letter-spacing:0.125px;">A binding between input port and element</div>
<svg class="s" style="left:16px;top:690px;" width="22" height="22" viewBox="0 0 22 22"><defs><linearGradient id="hg" x1="0" y1="0" x2="0" y2="1"><stop offset="0" stop-color="#ffffff"/><stop offset="1" stop-color="#e4e4e4"/></linearGradient></defs><circle cx="11" cy="11" r="9.6" fill="url(#hg)" stroke="#4a5f80" stroke-width="1.2"/><path d="M7.8,8.2 Q7.8,5 11,5 Q14.2,5 14.2,7.8 Q14.2,9.6 12.2,10.6 Q11,11.3 11,13" fill="none" stroke="#4a5f80" stroke-width="2"/><circle cx="11" cy="16" r="1.2" fill="#4a5f80"/></svg>
<div class="r" style="left:794px;top:691px;width:90px;height:23px;background:#e1e1e1;border:1px solid #adadad;box-sizing:border-box;"></div>
<div class="r" style="left:892px;top:691px;width:90px;height:23px;background:#e1e1e1;border:1px solid #adadad;box-sizing:border-box;"></div>
<div class="t" style="left:831px;top:695px;color:#000;">OK</div>
<div class="t" style="left:919.4px;top:695px;color:#000;">Cancel</div>
</body></html>
